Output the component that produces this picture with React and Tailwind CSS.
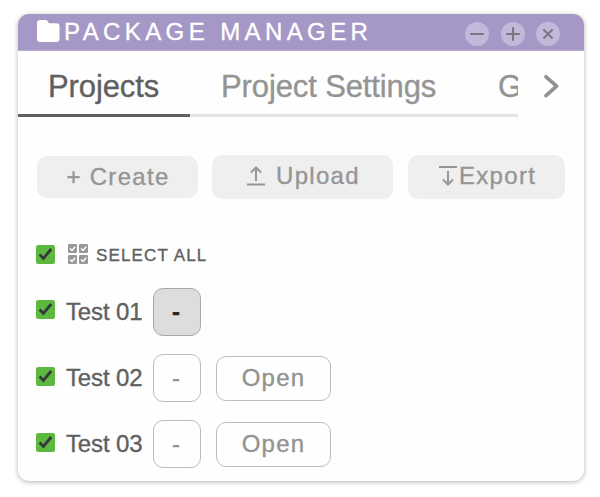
function FolderIcon() {
  return (
    <svg className="mb-[3px] block h-6 w-6 shrink-0" viewBox="0 0 24 24" fill="#fff">
      <path d="M1 4a3 3 0 0 1 3-3h5.5a3 3 0 0 1 2.7 1.8l.6 1.4H20.5a3 3 0 0 1 3 3V20a3 3 0 0 1-3 3H4a3 3 0 0 1-3-3z" />
    </svg>
  );
}

function WindowButton({ d }) {
  return (
    <svg className="block h-6 w-6" viewBox="0 0 24 24" fill="none" stroke="#7b7781" strokeWidth="2.1" strokeLinecap="round">
      <circle cx="12" cy="12" r="12" fill="#c3b8da" stroke="none" />
      <path d={d} />
    </svg>
  );
}

function Check() {
  return (
    <svg className="block h-[19px] w-[19px] shrink-0" viewBox="0 0 19 19" fill="none">
      <rect width="19" height="19" rx="2.2" fill="#5cb83f" />
      <path d="M3.6 9.6l3.8 3.9L15.2 4" stroke="#363a3a" strokeWidth="2.8" strokeLinejoin="miter" />
    </svg>
  );
}

function GridCheckIcon() {
  return (
    <svg className="block h-5 w-5 shrink-0" viewBox="0 0 20 20" fill="none">
      {[[0, 0], [11, 0], [0, 11], [11, 11]].map(([x, y]) => (
        <g key={`${x}-${y}`} transform={`translate(${x} ${y})`}>
          <rect width="9" height="9" rx="1.2" fill="#989898" />
          <path d="M2 4.4l2 2.1 3.2-3.7" stroke="#fff" strokeWidth="1.4" />
        </g>
      ))}
    </svg>
  );
}

function Row({ name, active }) {
  return (
    <div className="flex h-12 items-center">
      <div className={active ? "h-[25px]" : "h-[23px]"}><Check /></div>
      <span className="ml-[11px] w-[87px] whitespace-nowrap text-[24px] leading-7 tracking-[-0.15px] text-[#606060]">{name}</span>
      <button
        className={
          active
            ? "flex h-12 w-12 items-center justify-center rounded-[10px] border border-[#a8a8a8] bg-[#dddddd] pr-[2px] text-[24px] font-bold leading-7 text-[#222]"
            : "flex h-12 w-12 items-center justify-center rounded-[10px] border border-[#bdbdbd] pr-[2px] text-[24px] leading-7 text-[#929292]"
        }
      >
        -
      </button>
      {!active && (
        <button className="ml-[15px] flex h-[45px] w-[115px] items-center justify-center rounded-[10px] border border-[#bdbdbd] text-[24px] leading-7 tracking-[1.2px] text-[#929292]">
          Open
        </button>
      )}
    </div>
  );
}

const actionClass = "flex items-center rounded-[10px] bg-[#efefef] text-[24px] leading-7 tracking-[1.3px] text-[#959595]";

export default function App() {
  return (
    <div className="h-[497px] w-[600px] overflow-hidden bg-white pl-[18px] pt-[14px] font-['Liberation_Sans',Arial,sans-serif] [-webkit-text-stroke:0.35px_currentColor]">
      <div className="h-[467px] w-[566px] overflow-hidden rounded-[11px] bg-[#fefefe] shadow-[0_1px_5px_rgba(0,0,0,0.3)]">
        <header className="flex h-[37px] items-center border-b border-[#b8acd3] bg-[#a597c6] pl-[18px] pr-6">
          <FolderIcon />
          <h1 className="ml-1 whitespace-nowrap text-[24px] leading-7 tracking-[4.4px] text-white">PACKAGE MANAGER</h1>
          <div className="ml-auto mt-[3px] flex gap-[11.5px]">
            <WindowButton d="M6 12h12" />
            <WindowButton d="M6 12h12M12 6v12" />
            <WindowButton d="M8 8l8 8M16 8l-8 8" />
          </div>
        </header>

        <nav className="flex h-[66px] text-[31px] leading-9 tracking-[-0.12px]">
          <div className="flex w-[500px] overflow-hidden">
            <div className="w-[172px] shrink-0 border-b-[3px] border-[#606060] pl-[30px] pt-[18px] text-[#606060]">Projects</div>
            <div className="flex grow whitespace-nowrap border-b-[3px] border-[#e4e4e4] pl-[31px] pt-[18px] text-[#949494]">
              <span className="w-[277px] shrink-0">Project Settings</span>
              <span className="w-[20px] overflow-hidden">G</span>
            </div>
          </div>
          <svg className="ml-[25px] mt-[23px] block h-6 w-4" viewBox="0 0 16 24" fill="none" stroke="#929292" strokeWidth="3.7" strokeLinecap="round" strokeLinejoin="round">
            <path d="M3 2.8l10.6 9.4L3 21.6" />
          </svg>
        </nav>

        <div className="mt-[37px] flex h-[45px] items-center pl-[19px]">
          <button className={`${actionClass} h-[42px] w-[161px] justify-center pl-[1px]`}>+ Create</button>
          <button className={`${actionClass} ml-[14px] h-11 w-[181px] pb-[1px] pl-[35px]`}>
            <svg className="mr-[11px] block h-5 w-[18px] shrink-0" viewBox="0 0 18 20" fill="none" stroke="#959595" strokeWidth="2">
              <path d="M0 18.5h18M9 15V2M4 6.5L9 1.5l5 5" />
            </svg>
            Upload
          </button>
          <button className={`${actionClass} ml-[15px] h-11 w-[157px] pb-[2px] pl-[31px]`}>
            <svg className="mr-[2px] block h-5 w-[18px] shrink-0" viewBox="0 0 18 20" fill="none" stroke="#959595" strokeWidth="2">
              <path d="M0 1h18M9 5v13M4 13.5l5 5 5-5" />
            </svg>
            Export
          </button>
        </div>

        <div className="mt-[43px] flex h-6 items-center pl-[18px]">
          <Check />
          <div className="mb-[1px] ml-[13px]"><GridCheckIcon /></div>
          <span className="ml-2 mt-[3px] whitespace-nowrap text-[17px] leading-5 tracking-[1.15px] text-[#606060]">SELECT ALL</span>
        </div>

        <div className="mt-[22px] flex flex-col gap-[18px] pl-[18px]">
          <Row name="Test 01" active />
          <Row name="Test 02" />
          <Row name="Test 03" />
        </div>
      </div>
    </div>
  );
}
